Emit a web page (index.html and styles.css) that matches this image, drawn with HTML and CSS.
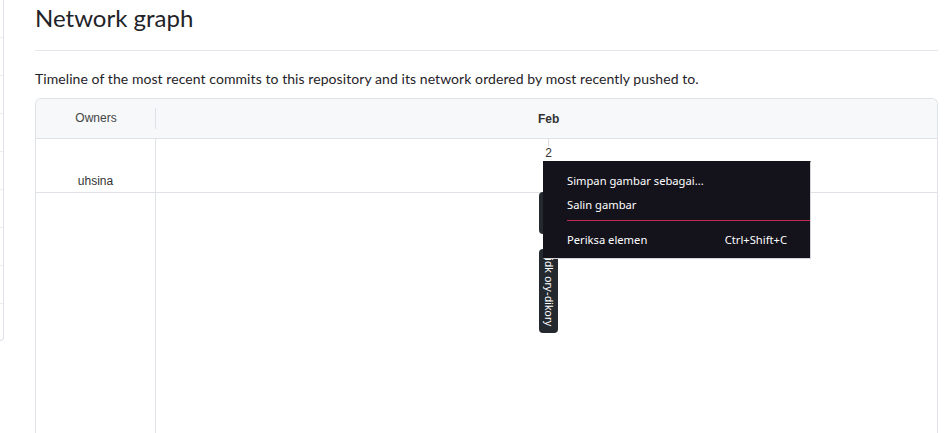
FILE: index.html
```html
<!DOCTYPE html>
<html lang="en">
<head>
<meta charset="utf-8">
<title>Network graph</title>
<link rel="stylesheet" href="styles.css">
</head>
<body>
<div class="page">
  <aside class="sidebar">
    <div class="side-item"></div>
    <div class="side-item"></div>
    <div class="side-item"></div>
    <div class="side-item"></div>
    <div class="side-item"></div>
    <div class="side-item"></div>
    <div class="side-item"></div>
    <div class="side-item"></div>
    <div class="side-item last"></div>
  </aside>
  <main class="main">
    <h1 class="title">Network graph</h1>
    <p class="desc">Timeline of the most recent commits to this repository and its network ordered by most recently pushed to.</p>
    <div class="graph">
      <div class="graph-head">
        <div class="col-owners"><span>Owners</span></div>
        <div class="col-time"><span class="month">Feb</span></div>
      </div>
      <div class="graph-body">
        <div class="row">
          <div class="owner-cell">uhsina</div>
          <div class="time-cell">
            <div class="day"><span class="tick"></span><span class="day-num">2</span></div>
          </div>
        </div>
        <div class="row rest">
          <div class="owner-cell"></div>
          <div class="time-cell"></div>
        </div>
      </div>
      <div class="pill pill-a"></div>
      <div class="pill pill-b"><span>tidk ory-dikory</span></div>
      <ul class="menu">
        <li class="menu-item">Simpan gambar sebagai...</li>
        <li class="menu-item">Salin gambar</li>
        <li class="menu-sep"></li>
        <li class="menu-item"><span>Periksa elemen</span><span class="shortcut">Ctrl+Shift+C</span></li>
      </ul>
    </div>
  </main>
</div>
</body>
</html>
```
FILE: styles.css
```css
* { box-sizing: border-box; }
html, body { margin: 0; padding: 0; background: #ffffff; }
body {
  font-family: Lato, "Noto Sans", sans-serif;
  color: #1f2328;
  width: 944px;
  height: 433px;
  overflow: hidden;
}
.page {
  display: flex;
  align-items: flex-start;
}
.sidebar {
  width: 4px;
  height: 341px;
  border: 1px solid #dfe2e8;
  border-left: none;
  border-top: none;
  border-radius: 0 0 6px 0;
  display: flex;
  flex-direction: column;
  overflow: hidden;
}
.side-item {
  height: 38px;
  flex: none;
  border-bottom: 1px solid #eceef1;
}
.side-item.last { border-bottom: none; flex: 1; }
.main {
  margin-left: 31px;
  width: 903px;
}
.title {
  margin: 0;
  font-size: 24px;
  font-weight: 400;
  line-height: 36px;
  height: 51px;
  border-bottom: 1px solid #e3e6ea;
}
.desc {
  margin: 18px 0 0 0;
  font-size: 14px;
  line-height: 20px;
  height: 29px;
  letter-spacing: 0.07px;
}
.graph {
  position: relative;
  border: 1px solid #dfe3e8;
  border-bottom: none;
  border-radius: 6px 6px 0 0;
  height: 340px;
}
.graph-head {
  display: flex;
  height: 40px;
  background: #f6f8fa;
  border-bottom: 1px solid #dfe3e8;
  border-radius: 6px 6px 0 0;
  font-family: "Liberation Sans", Arial, sans-serif;
  font-size: 12px;
}
.col-owners {
  width: 120px;
  display: flex;
  align-items: center;
  justify-content: center;
  position: relative;
  color: #444;
  padding-bottom: 2px;
}
.col-owners::after {
  content: "";
  position: absolute;
  right: 0;
  top: 9px;
  height: 21px;
  width: 1px;
  background: #dfe3e8;
}
.col-time {
  flex: 1;
  display: flex;
  align-items: center;
  padding-left: 382px;
}
.month {
  font-weight: 700;
  color: #333;
}
.graph-body {
  font-family: "Liberation Sans", Arial, sans-serif;
  font-size: 12px;
  color: #333;
}
.row {
  display: flex;
  height: 54px;
  border-bottom: 1px solid #dfe3e8;
}
.row.rest { height: 260px; border-bottom: none; }
.owner-cell {
  width: 120px;
  border-right: 1px solid #dfe3e8;
  display: flex;
  align-items: flex-end;
  justify-content: center;
  padding-bottom: 4px;
  font-size: 12px;
  color: #333;
}
.time-cell {
  flex: 1;
  position: relative;
}
.day {
  margin-left: 390px;
  width: 5px;
  display: flex;
  flex-direction: column;
  align-items: center;
}
.tick {
  width: 1px;
  height: 7px;
  background: #dcdcdc;
}
.day-num {
  font-size: 12px;
  line-height: 14px;
  color: #333;
}
.pill {
  position: absolute;
  background: #24292f;
  border-radius: 4px;
}
.pill-a {
  left: 503px;
  top: 93px;
  width: 18px;
  height: 42px;
}
.pill-b {
  left: 503px;
  top: 150px;
  width: 19px;
  height: 84px;
  display: flex;
  justify-content: center;
  align-items: center;
  overflow: hidden;
}
.pill-b span {
  writing-mode: vertical-rl;
  color: #ffffff;
  font-family: "Liberation Sans", Arial, sans-serif;
  font-size: 11px;
  line-height: 12px;
  white-space: nowrap;
  letter-spacing: 0.2px;
}
.menu {
  position: absolute;
  left: 507px;
  top: 62px;
  width: 268px;
  margin: 0;
  padding: 6px 0 7px 0;
  list-style: none;
  background: #14131c;
  border: 1px solid #d4d4d8;
  border-top-color: #14131c;
  border-left-color: #14131c;
  color: #ffffff;
  font-family: "Noto Sans", "Open Sans", sans-serif;
  font-size: 11.2px;
}
.menu-item {
  height: 24px;
  display: flex;
  align-items: center;
  justify-content: space-between;
  padding: 0 23px 0 23px;
}
.menu-sep {
  height: 1px;
  margin: 4px 0 6px 23px;
  background: #c22a4f;
}
.shortcut { color: #ffffff; }
```
